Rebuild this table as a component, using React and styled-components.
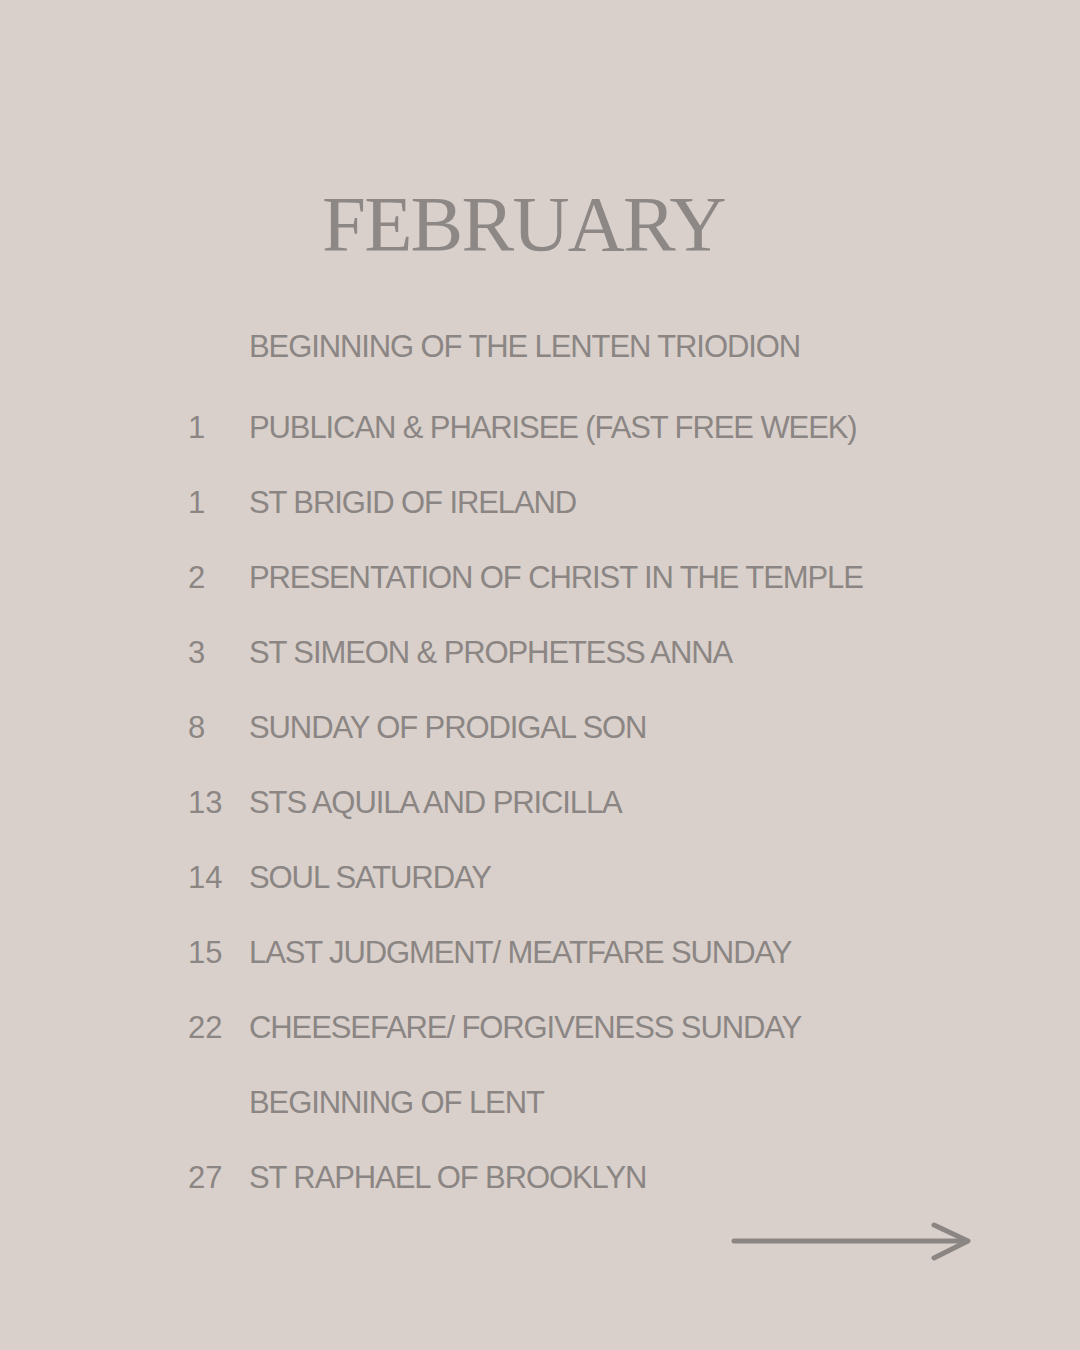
import React from "react";
import styled, { createGlobalStyle } from "styled-components";

const Global = createGlobalStyle`
  html, body { margin: 0; padding: 0; background: #d9d0cb; }
  #root { width: 1080px; height: 1350px; }
`;

const Page = styled.div`
  width: 1080px;
  height: 1350px;
  box-sizing: border-box;
  background: #d9d0cb;
  padding-top: 184px;
  display: flex;
  flex-direction: column;
  color: #8b8684;
`;

const Title = styled.h1`
  margin: 0 0 0 322px;
  font-family: "Liberation Serif", "Times New Roman", serif;
  font-weight: 400;
  font-size: 79px;
  line-height: 80px;
  letter-spacing: -1.8px;
  color: #8d8886;
`;

const List = styled.div`
  margin: 45px 0 0 188px;
  display: flex;
  flex-direction: column;
`;

const Row = styled.div`
  display: grid;
  grid-template-columns: 61px auto;
  height: 75px;
  align-items: center;
  font-family: "Liberation Sans", Arial, sans-serif;
  font-size: 31px;
  line-height: 75px;
  letter-spacing: -1.1px;
  margin-bottom: ${(p) => (p.$gap ? "6px" : "0")};
`;

const Day = styled.span`
  letter-spacing: 0;
`;

const Event = styled.span``;

const Footer = styled.div`
  display: flex;
  justify-content: flex-end;
  padding: 7px 107px 0 0;
`;

const Arrow = () => (
  <svg width="242" height="42" viewBox="0 0 242 42">
    <g stroke="#8b8684" strokeWidth="5" strokeLinecap="round" strokeLinejoin="round" fill="none">
      <line x1="3" y1="19" x2="236" y2="19" />
      <polyline points="203,3 237,19 203,36" />
    </g>
  </svg>
);

const events = [
  ["", "BEGINNING OF THE LENTEN TRIODION"],
  ["1", "PUBLICAN & PHARISEE (FAST FREE WEEK)"],
  ["1", "ST BRIGID OF IRELAND"],
  ["2", "PRESENTATION OF CHRIST IN THE TEMPLE"],
  ["3", "ST SIMEON & PROPHETESS ANNA"],
  ["8", "SUNDAY OF PRODIGAL SON"],
  ["13", "STS AQUILA AND PRICILLA"],
  ["14", "SOUL SATURDAY"],
  ["15", "LAST JUDGMENT/ MEATFARE SUNDAY"],
  ["22", "CHEESEFARE/ FORGIVENESS SUNDAY"],
  ["", "BEGINNING OF LENT"],
  ["27", "ST RAPHAEL OF BROOKLYN"],
];

export default function App() {
  return (
    <>
      <Global />
      <Page>
        <Title>FEBRUARY</Title>
        <List>
          {events.map(([d, e], i) => (
            <Row key={i} $gap={i === 0}>
              <Day>{d}</Day>
              <Event>{e}</Event>
            </Row>
          ))}
        </List>
        <Footer>
          <Arrow />
        </Footer>
      </Page>
    </>
  );
}
